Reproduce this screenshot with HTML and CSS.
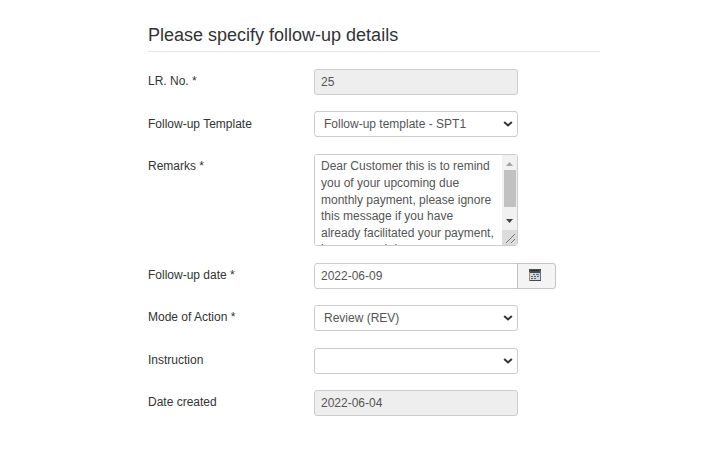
FILE: index.html
```html
<!DOCTYPE html>
<html lang="en">
<head>
  <meta charset="UTF-8" />
  <title>Follow-up details</title>
  <meta name="viewport" content="width=device-width, initial-scale=1.0" />
  <link rel="stylesheet" href="styles.css">
</head>
<body>

  <form class="followup-form">
    <h3 class="legend"><span>Please specify follow-up details</span></h3>

    <div class="row">
      <label for="lrNo"><span>LR. No. *</span></label>
      <input type="text" id="lrNo" class="control" value="25" readonly />
    </div>

    <div class="row">
      <label for="template"><span>Follow-up Template</span></label>
      <div class="select">
        <select id="template" class="control">
          <option>Follow-up template - SPT1</option>
        </select>
        <svg class="chevron" viewBox="0 0 10 6"><path d="M1.2 1 5 4.5 8.8 1" /></svg>
      </div>
    </div>

    <div class="row row-remarks">
      <label for="remarks"><span>Remarks *</span></label>
      <div class="textarea">
        <textarea id="remarks">Dear Customer this is to remind you of your upcoming due monthly payment, please ignore this message if you have already facilitated your payment, have a good day.</textarea>
        <div class="scrollbar">
          <svg class="arrow arrow-up" viewBox="0 0 7 4"><path d="M0 4 3.5 0 7 4z" /></svg>
          <div class="thumb"></div>
          <svg class="arrow" viewBox="0 0 7 4"><path d="M0 0h7L3.5 4z" /></svg>
          <svg class="grip" viewBox="0 0 15 15"><path d="M4 13 13 4M9 13 13 9" /></svg>
        </div>
      </div>
    </div>

    <div class="row">
      <label for="followDate"><span>Follow-up date *</span></label>
      <input type="text" id="followDate" class="control control-date" value="2022-06-09" />
      <button type="button" class="date-btn">
        <svg viewBox="0 0 12 12">
          <rect x="0" y="0" width="12" height="12" fill="#484a50" />
          <rect x="1" y="4" width="10" height="7" fill="#d5d9df" />
          <path d="M2 1.5h8" stroke="#2f3136" />
          <path d="M4 5.5h2M7 5.5h3M2 7.5h2M5 7.5h2M8 7.5h2M2 9.5h2M5 9.5h2" stroke="#5a6273" />
          <path d="M.5 3v9" stroke="#b08a55" />
          <path d="M11.5 2v9" stroke="#567299" />
        </svg>
      </button>
    </div>

    <div class="row">
      <label for="mode"><span>Mode of Action *</span></label>
      <div class="select">
        <select id="mode" class="control">
          <option>Review (REV)</option>
        </select>
        <svg class="chevron" viewBox="0 0 10 6"><path d="M1.2 1 5 4.5 8.8 1" /></svg>
      </div>
    </div>

    <div class="row">
      <label for="instruction"><span>Instruction</span></label>
      <div class="select">
        <select id="instruction" class="control">
          <option></option>
        </select>
        <svg class="chevron" viewBox="0 0 10 6"><path d="M1.2 1 5 4.5 8.8 1" /></svg>
      </div>
    </div>

    <div class="row">
      <label for="created"><span>Date created</span></label>
      <input type="text" id="created" class="control" value="2022-06-04" readonly />
    </div>
  </form>

</body>
</html>
```

FILE: styles.css
```css
* {
  box-sizing: border-box;
}

body {
  margin: 0;
  background: #fff;
  color: #333;
  font-family: "Liberation Sans", Arial, sans-serif;
  font-size: 12px;
}

.followup-form {
  width: 452px;
  margin-left: 148px;
  padding-top: 18px;
}

.legend {
  height: 34px;
  margin: 0 0 17px;
  border-bottom: 1px solid #e5e5e5;
  font-size: 18px;
  font-weight: normal;
  line-height: 34px;
}

.row {
  display: flex;
  height: 26px;
  margin-bottom: 16.4px;
}

.row-remarks {
  height: 92px;
  margin-bottom: 17px;
}

label {
  width: 166px;
  padding-top: 0.2px;
  line-height: 25px;
}

.control {
  width: 204px;
  height: 26px;
  margin: 0;
  padding: 0 6px;
  border: 1px solid #ccc;
  border-radius: 3px;
  background: #fff;
  color: #555;
  font: inherit;
  outline: none;
}

.control[readonly] {
  background: #eee;
}

.select {
  position: relative;
  width: 204px;
}

.select .control {
  appearance: none;
  padding: 0 9px;
}

.chevron {
  position: absolute;
  right: 5px;
  top: 10px;
  width: 10px;
  height: 6px;
  fill: none;
  stroke: #333;
  stroke-width: 2;
  pointer-events: none;
}

.textarea {
  display: flex;
  width: 204px;
  height: 92px;
  border: 1px solid #ccc;
  border-radius: 3px;
  overflow: hidden;
}

.textarea textarea {
  width: 187px;
  height: 90px;
  margin: 0;
  padding: 3.6px 7px 0 6px;
  border: none;
  color: #555;
  font: inherit;
  line-height: 16.6px;
  resize: none;
  outline: none;
  overflow: hidden;
}

.scrollbar {
  display: flex;
  flex-direction: column;
  align-items: center;
  width: 15px;
  background: #f1f1f1;
}

.arrow {
  width: 7px;
  height: 4px;
  margin-top: 12px;
  fill: #444;
}

.arrow-up {
  margin: 7px 0 4px;
  fill: #a3a3a3;
}

.thumb {
  width: 12px;
  height: 37px;
  background: #c1c1c1;
}

.grip {
  width: 15px;
  height: 15px;
  margin-top: auto;
  background: #dcdcdc;
  fill: none;
  stroke: #777;
}

.control-date {
  border-radius: 3px 0 0 3px;
}

.date-btn {
  display: flex;
  align-items: center;
  width: 39px;
  height: 26px;
  margin-left: -1px;
  padding: 0 0 2px 11px;
  border: 1px solid #c4c4c4;
  border-radius: 0 3px 3px 0;
  background: #f4f4f4;
}

.date-btn svg {
  width: 12px;
  height: 12px;
}
```
